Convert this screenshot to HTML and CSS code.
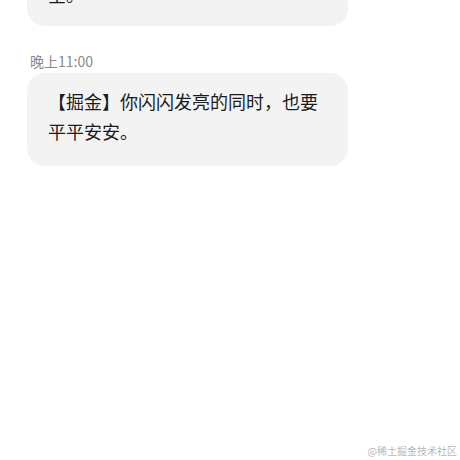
FILE: index.html
```html
<!DOCTYPE html>
<html lang="zh">
<head>
<meta charset="utf-8">
<link rel="stylesheet" href="styles.css">
</head>
<body>
<div class="chat">
  <div class="bubble bubble-top">安全提示：请勿泄露验证码给他人，谨防诈骗，保护好个人财产安全。</div>
  <div class="time">晚上11:00</div>
  <div class="bubble">【掘金】你闪闪发亮的同时，也要<br>平平安安。</div>
</div>
<div class="watermark">@稀土掘金技术社区</div>
</body>
</html>
```
FILE: styles.css
```css
html, body {
  margin: 0;
  padding: 0;
  background: #ffffff;
  width: 460px;
  height: 460px;
  overflow: hidden;
  position: relative;
}
.chat {
  display: flex;
  flex-direction: column;
  align-items: flex-start;
  padding: 0 112px 0 27px;
  font-family: "Noto Sans CJK SC", "Noto Sans", sans-serif;
}
.bubble {
  box-sizing: border-box;
  width: 321px;
  background: #f3f3f3;
  border-radius: 18px;
  padding: 13px 20px 20px 21px;
  font-size: 18px;
  line-height: 30px;
  color: #1b1b1b;
}
.bubble-top {
  margin-top: -94px;
  height: 120px;
  overflow: hidden;
}
.time {
  margin: 26px 0 3px 3px;
  font-size: 14px;
  line-height: 18px;
  color: #8a8a8a;
}
.watermark {
  position: absolute;
  right: 3px;
  bottom: 3px;
  font-family: "Noto Sans CJK SC", sans-serif;
  font-size: 10px;
  line-height: 12px;
  color: #b8b8b8;
}
```
